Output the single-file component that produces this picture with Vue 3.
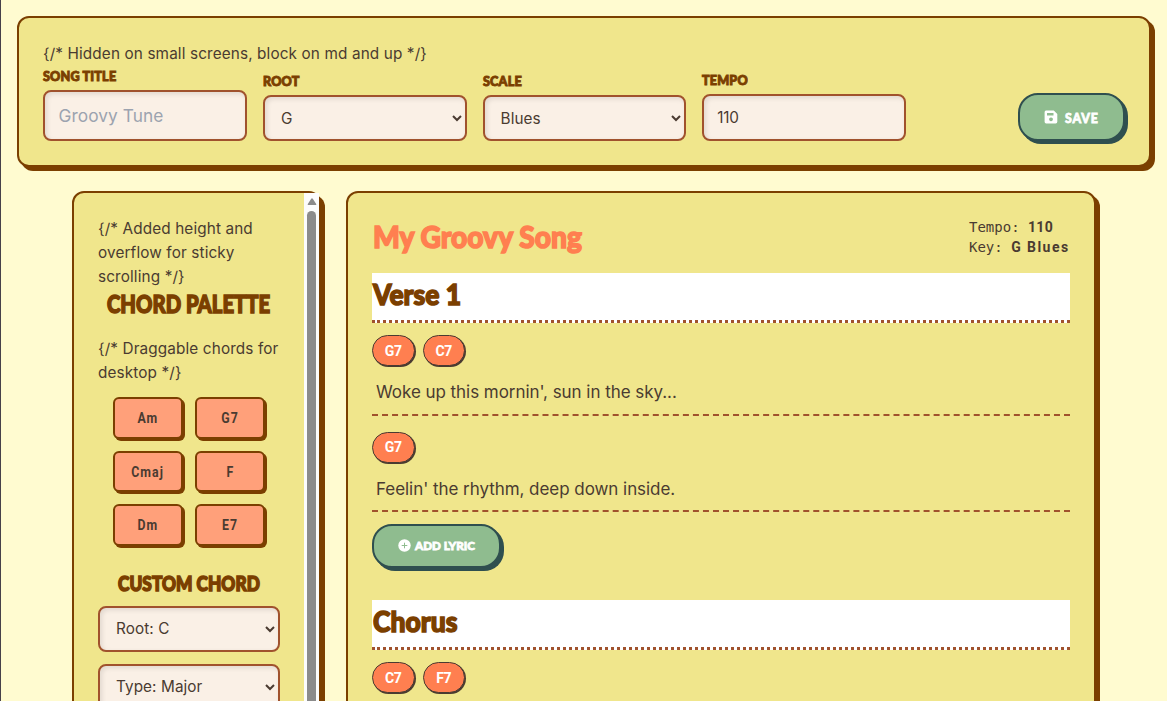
<script setup>
import { ref } from 'vue'

const title = ref('')
const root = ref('G')
const scale = ref('Blues')
const tempo = ref(110)
const customRoot = ref('C')
const customType = ref('Major')
const palette = ['Am', 'G7', 'Cmaj', 'F', 'Dm', 'E7']
const sections = [
  {
    name: 'Verse 1',
    editable: true,
    lines: [
      { chords: ['G7', 'C7'], text: "Woke up this mornin', sun in the sky..." },
      { chords: ['G7'], text: "Feelin' the rhythm, deep down inside." },
    ],
  },
  {
    name: 'Chorus',
    editable: false,
    lines: [{ chords: ['C7', 'F7'], text: '' }],
  },
]
</script>

<template>
  <div class="page">
    <header class="card toolbar">
      <p class="note">{/* Hidden on small screens, block on md and up */}</p>
      <div class="fields">
        <div class="field">
          <label class="display">SONG TITLE</label>
          <input v-model="title" class="control big" placeholder="Groovy Tune" />
        </div>
        <div class="field">
          <label class="display">ROOT</label>
          <select v-model="root" class="control"><option>G</option></select>
        </div>
        <div class="field">
          <label class="display">SCALE</label>
          <select v-model="scale" class="control"><option>Blues</option></select>
        </div>
        <div class="field">
          <label class="display">TEMPO</label>
          <input v-model="tempo" class="control tempo" />
        </div>
        <button class="btn save display">
          <svg width="14" height="14" viewBox="0 0 14 14">
            <path fill="#fff" stroke="none" fill-rule="evenodd" d="M2 .6h7.800L13.300 4v7.800a1.600 1.600 0 0 1-1.600 1.600H2.200a1.600 1.600 0 0 1-1.600-1.600V2.200A1.600 1.600 0 0 1 2 .6zM3 3v2.500h6.500V3zM7 7.400a1.900 1.900 0 1 0 .01 0z" />
          </svg>
          <span>SAVE</span>
        </button>
      </div>
    </header>

    <main class="workspace">
      <aside class="card side">
        <div class="side-body">
          <p class="note">{/* Added height and<br />overflow for sticky<br />scrolling */}</p>
          <h2 class="display"><span>CHORD PALETTE</span></h2>
          <p class="note">{/* Draggable chords for<br />desktop */}</p>
          <div class="palette">
            <div v-for="c in palette" :key="c" class="chord"><span>{{ c }}</span></div>
          </div>
          <h3 class="display"><span>CUSTOM CHORD</span></h3>
          <select v-model="customRoot" class="control"><option value="C">Root: C</option></select>
          <select v-model="customType" class="control"><option value="Major">Type: Major</option></select>
        </div>
        <div class="scrollbar">
          <svg width="10" height="8" viewBox="0 0 10 8"><path fill="#8b8b8b" d="M4.200.8a1 1 0 0 1 1.600 0l3.400 5.100a.7.7 0 0 1-.6 1.100H1.400a.7.7 0 0 1-.6-1.100z" /></svg>
          <div class="thumb"></div>
        </div>
      </aside>

      <section class="card sheet">
        <div class="sheet-head">
          <h1 class="display">My Groovy Song</h1>
          <div class="meta">
            <div>Tempo: <b>110</b></div>
            <div>Key: <b class="key">G Blues</b></div>
          </div>
        </div>
        <div v-for="s in sections" :key="s.name" class="section">
          <h2 class="display band"><span>{{ s.name }}</span></h2>
          <div v-for="l in s.lines" :key="l.text" class="line">
            <div class="chips"><span v-for="c in l.chords" :key="c" class="chip">{{ c }}</span></div>
            <p class="lyric">{{ l.text }}</p>
          </div>
          <button v-if="s.editable" class="btn add display">
            <svg width="13" height="13" viewBox="0 0 13 13">
              <circle cx="6.500" cy="6.500" r="6.200" fill="#fff" />
              <path d="M6.500 3.700v5.600M3.700 6.500h5.600" stroke="#8fbc8f" stroke-width="1" />
            </svg>
            <span>ADD LYRIC</span>
          </button>
        </div>
      </section>
    </main>
  </div>
</template>

<style>
body { background: #fffbd0; overflow: hidden; }
</style>

<style scoped>
* { box-sizing: border-box; }
.page {
  height: 701px;
  overflow: hidden;
  padding: 16px 16px 0;
  border-left: 1px solid #46404a;
  color: #4a3b31;
  font-family: Inter, sans-serif;
  font-weight: 370;
}
p, h1, h2, h3 { margin: 0; }
.display {
  font-family: Lato, sans-serif;
  font-weight: 900;
  color: #7b3f00;
  -webkit-text-stroke: 1.500px currentColor;
}
.display span { display: inline-block; transform-origin: 0 50%; }
.card {
  background: #f0e68c;
  border: 2px solid #7b3f00;
  border-radius: 12px;
  box-shadow: 4px 4px 0 #7b3f00;
}
.note { font-size: 15.300px; line-height: 24px; white-space: nowrap; letter-spacing: 0.130px; }
.toolbar { width: 1134px; height: 151px; padding: 24px; }
.fields {
  display: grid;
  grid-template-columns: repeat(5, minmax(0, 1fr));
  column-gap: 16px;
  align-items: end;
  height: 75px;
  margin: 0 -0.400px 0 0.450px;
}
.field { display: flex; flex-direction: column; gap: 4px; }
.field label {
  align-self: flex-start;
  font-size: 14px;
  line-height: 20px;
  -webkit-text-stroke-width: 1px;
  transform: scaleX(0.9);
  transform-origin: 0 50%;
  letter-spacing: 0.200px;
}
.control {
  width: 100%;
  height: 46px;
  border: 2px solid #a0522d;
  border-radius: 8px;
  background: #faf0e6;
  box-shadow: inset 2px 2px 5px rgba(0, 0, 0, 0.1);
  color: #4a3b31;
  font: 370 15.300px Inter, sans-serif;
  letter-spacing: 0.080px;
  padding: 0 12px;
  outline: none;
}
.big { height: 51px; font-size: 17.300px; padding-left: 13px; }
.big::placeholder { color: #9ca3af; }
.tempo { height: 47px; padding-left: 13px; letter-spacing: -0.200px; }
.btn {
  display: flex;
  align-items: center;
  justify-content: center;
  background: #8fbc8f;
  border: 2px solid #2f4f4f;
  box-shadow: 3px 3px 0 #2f4f4f;
  border-radius: 20px;
  color: #fff;
  padding: 0;
  -webkit-text-stroke-width: 0.800px;
}
.save { justify-self: end; width: 107px; height: 48px; gap: 8px; font-size: 14px; letter-spacing: 1px; }
.save svg { margin-right: -1px; }
.save span { transform: scaleX(0.88); margin-right: -4px; }
.workspace { display: flex; gap: 25px; padding-left: 55px; margin-top: 24px; }
.side { width: 249px; height: 640px; display: flex; flex: none; }
.side-body { flex: 1; padding: 24px; min-width: 0; }
.side-body h2, .side-body h3 { display: flex; justify-content: center; white-space: nowrap; }
.side-body h2 span, .side-body h3 span { transform-origin: 50% 50%; }
.side-body h2 { font-size: 24px; line-height: 32px; margin-bottom: 16px; }
.side-body h2 span { transform: translateY(-1px) scaleX(0.845); }
.side-body h3 { font-size: 20px; line-height: 28px; margin: 24px 0 8px; }
.side-body h3 span { transform: translateY(-1px) scaleX(0.865); }
.side-body .control { margin-bottom: 12px; display: block; }
.palette { display: grid; grid-template-columns: 70px 70px; gap: 12px; justify-content: center; margin-top: 12px; }
.chord {
  height: 41.500px;
  display: flex;
  align-items: center;
  justify-content: center;
  background: #ffa07a;
  border: 2px solid #7b3f00;
  border-radius: 6px;
  box-shadow: 2px 2px 0 #7b3f00;
  font: bold 14px Roboto, sans-serif;
  letter-spacing: 1.200px;
}
.chord span { transform: scaleX(0.88); padding-top: 1px; }
.scrollbar { width: 15px; background: #fcfcfc; display: flex; flex-direction: column; align-items: center; padding-top: 5px; flex: none; }
.thumb { width: 9px; height: 560px; margin-top: 5px; background: #8b8b8b; border-radius: 5px; }
.sheet { width: 750px; height: 640px; padding: 24px; }
.sheet-head { display: flex; justify-content: space-between; height: 56px; }
.sheet-head h1 { font-size: 30px; line-height: 38px; color: #ff7f50; white-space: nowrap; transform: scaleX(0.94); transform-origin: 0 50%; padding-left: 1px; }
.meta { font: 14px/20px "DejaVu Sans Mono", monospace; width: 101px; white-space: nowrap; }
.meta b { font-family: Roboto, sans-serif; letter-spacing: 0.300px; }
.meta .key { letter-spacing: 1.450px; }
.section { margin-bottom: 32px; }
.band { height: 50px; font-size: 28px; line-height: 43px; padding-left: 1px; background: #fff; border-bottom: 3px dotted #a0522d; }
.band span { transform: scaleX(0.945); }
.line { height: 96.500px; padding-top: 12px; }
.chips { display: flex; gap: 8px; }
.chip {
  width: 42.500px;
  height: 31px;
  display: flex;
  align-items: center;
  justify-content: center;
  background: #ff7f50;
  border: 1px solid #4a3b31;
  border-radius: 16px;
  box-shadow: 1px 1px 0 #4a3b31;
  color: #fff;
  font: bold 14px Roboto, sans-serif;
  letter-spacing: -0.300px;
}
.lyric { height: 49.800px; line-height: 51px; padding: 1px 0 0 4px; font-size: 17px; letter-spacing: -0.050px; border-bottom: 2px dashed #a0522d; white-space: nowrap; }
.add { width: 129px; height: 44px; gap: 4px; font-size: 12px; margin-top: 8px; padding: 0 0 2px 2px; }
.add span { transform: scaleX(0.97); }
</style>
